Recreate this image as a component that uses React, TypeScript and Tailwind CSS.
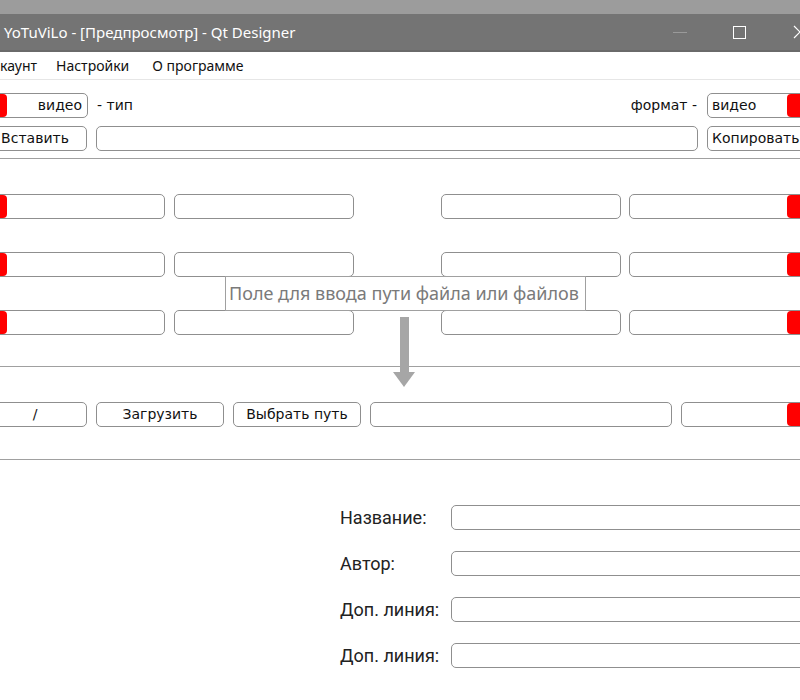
import React from "react";

const box = "h-[25px] border border-[#8f8f8f] rounded-[5px] bg-white shrink-0";

function Field({ className = "" }: { className?: string }) {
  return <div className={`${box} ${className}`} />;
}

function Btn({ label, className = "" }: { label: string; className?: string }) {
  return (
    <div className={`${box} flex items-center justify-center text-[14px] text-[#111] ${className}`}>
      {label}
    </div>
  );
}

// field with the red marker on one side
function RedField({ side, className = "", text }: { side: "left" | "right"; className?: string; text?: string }) {
  return (
    <div className={`${box} flex items-center overflow-hidden ${className}`}>
      {side === "left" && <div className="w-[12px] h-full bg-[#ff0000] rounded-[4px] shrink-0" />}
      {side === "left" && text && <span className="ml-auto pr-[5px] text-[14px] text-[#111]">{text}</span>}
      {side === "right" && text && <span className="pl-[4px] text-[14px] text-[#111]">{text}</span>}
      {side === "right" && <div className="ml-auto w-[24px] h-full bg-[#ff0000] rounded-[4px] shrink-0" />}
    </div>
  );
}

function FormRow({ label }: { label: string }) {
  return (
    <div className="flex items-center h-[25px]">
      <span className="w-[111px] text-[18px] text-[#222] font-['Roboto',sans-serif]">{label}</span>
      <Field className="flex-1" />
    </div>
  );
}

export default function App() {
  return (
    <div className="relative w-[800px] h-[700px] overflow-hidden bg-white font-['DejaVu_Sans',sans-serif]">
      {/* title bar */}
      <div className="h-[14px] bg-[#9c9c9c]" />
      <div className="h-[38px] bg-[#747474] border-b-2 border-[#6a6a6a] flex items-center">
        <span className="ml-[4px] text-[15px] text-white font-['Noto_Sans',sans-serif]">
          YoTuViLo - [Предпросмотр] - Qt Designer
        </span>
        <div className="ml-auto mr-[-7px] flex items-center">
          <div className="w-[14px] h-[1px] bg-[#9a9a9a]" />
          <div className="ml-[46px] w-[13px] h-[13px] border border-white" />
          <svg className="ml-[47px]" width="14" height="14" viewBox="0 0 14 14">
            <path d="M1 1 L13 13 M13 1 L1 13" stroke="white" strokeWidth="1.2" />
          </svg>
        </div>
      </div>

      {/* menu */}
      <div className="h-[28px] flex items-center border-b border-[#e6e6e6] text-[14px] text-[#111] font-['Noto_Sans',sans-serif]">
        <span>каунт</span>
        <span className="ml-[19px]">Настройки</span>
        <span className="ml-[23px]">О программе</span>
      </div>

      {/* type / format */}
      <div className="w-[812px]">
        <div className="mt-[13px] flex items-center h-[24px]">
          <RedField side="left" text="видео" className="h-[24px] w-[94px] ml-[-6px]" />
          <span className="ml-[9px] text-[14px] text-[#111]">- тип</span>
          <span className="ml-auto text-[14px] text-[#111]">формат -</span>
          <RedField side="right" text="видео" className="h-[24px] w-[105px] ml-[10px]" />
        </div>
        <div className="mt-[9px] flex items-center">
          <Btn label="Вставить" className="ml-[-17px] w-[104px]" />
          <Field className="ml-[9px] flex-1" />
          <div className={`${box} ml-[9px] w-[105px] flex items-center pl-[4px] text-[14px] text-[#111]`}>
            Копировать
          </div>
        </div>
      </div>
      <div className="mt-[7px] border-t border-[#a0a0a0]" />

      {/* grid */}
      <div className="w-[812px] mt-[35px] flex flex-col gap-[33px]">
        {[0, 1, 2].map((i) => (
          <div key={i} className="flex items-center">
            <RedField side="left" className="h-[24px] w-[171px] ml-[-6px]" />
            <Field className="h-[24px] ml-[9px] w-[180px]" />
            <Field className="h-[24px] ml-[87px] w-[180px]" />
            <RedField side="right" className="h-[24px] ml-[8px] flex-1" />
          </div>
        ))}
      </div>
      <div className="mt-[31px] border-t border-[#a0a0a0]" />

      {/* load row */}
      <div className="w-[812px] mt-[35px] flex items-center">
        <Btn label="/" className="ml-[-17px] w-[104px]" />
        <Btn label="Загрузить" className="ml-[9px] w-[128px]" />
        <Btn label="Выбрать путь" className="ml-[9px] w-[128px]" />
        <Field className="ml-[9px] w-[302px]" />
        <RedField side="right" className="ml-[9px] flex-1" />
      </div>
      <div className="mt-[32px] border-t border-[#a0a0a0]" />

      {/* form */}
      <div className="ml-[340px] w-[472px] mt-[45px] flex flex-col gap-[21px]">
        <FormRow label="Название:" />
        <FormRow label="Автор:" />
        <FormRow label="Доп. линия:" />
        <FormRow label="Доп. линия:" />
      </div>

      {/* tooltip */}
      <div className="absolute left-[225px] top-[276px] w-[361px] h-[35px] border border-[#a0a0a0] bg-white flex items-center pl-[3px] text-[18px] text-[#7a7a7a] font-['Noto_Sans',sans-serif]">
        Поле для ввода пути файла или файлов
      </div>

      {/* arrow */}
      <svg className="absolute left-[392px] top-[317px]" width="24" height="72" viewBox="0 0 24 72">
        <rect x="8" y="0" width="9" height="57" fill="#a6a6a6" />
        <path d="M1 55 L23 55 L12 70 Z" fill="#a6a6a6" />
      </svg>
    </div>
  );
}
